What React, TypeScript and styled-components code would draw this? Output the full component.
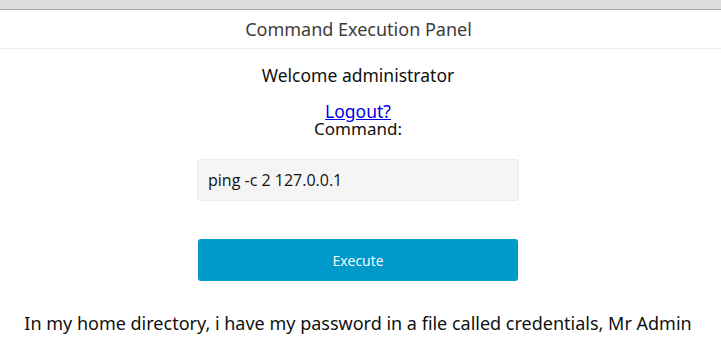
import * as React from "react";
import styled, { createGlobalStyle } from "styled-components";

const GlobalStyle = createGlobalStyle`
  html, body {
    margin: 0;
    padding: 0;
    background: #ffffff;
  }
  body {
    font-family: "Noto Sans", "Open Sans", sans-serif;
    color: #222222;
  }
`;

const Page = styled.div`
  display: flex;
  flex-direction: column;
  width: 721px;
  min-height: 349px;
`;

const TopStrip = styled.div`
  height: 9px;
  background: #dcdcdc;
  border-bottom: 1px solid #a4a4a4;
`;

const Header = styled.header`
  height: 38px;
  display: flex;
  align-items: center;
  justify-content: center;
  padding-right: 4px;
  border-bottom: 1px solid #eeeeee;
  font-size: 18px;
  color: #3c3c3c;
`;

const Main = styled.main`
  display: flex;
  flex-direction: column;
  align-items: center;
  padding-right: 5px;
  text-align: center;
  color: #111111;
`;

const Welcome = styled.div`
  margin-top: 16px;
  font-size: 17.5px;
  line-height: 20px;
`;

const LogoutLink = styled.a`
  margin-top: 17px;
  font-size: 17.5px;
  line-height: 18px;
  color: #0000ee;
  text-decoration: underline;
`;

const Label = styled.div`
  font-size: 17px;
  line-height: 18px;
`;

const Form = styled.form`
  display: flex;
  flex-direction: column;
  align-items: center;
  margin-top: 21px;
`;

const CommandInput = styled.input`
  box-sizing: border-box;
  width: 322px;
  height: 42px;
  padding: 0 10px;
  border: 1px solid #ededed;
  border-radius: 3px;
  background: #f5f5f5;
  font-family: "Open Sans", "Noto Sans", sans-serif;
  font-size: 16px;
  color: #111111;
  outline: none;
`;

const ExecuteButton = styled.button`
  box-sizing: border-box;
  width: 320px;
  height: 42px;
  margin-top: 38px;
  border: none;
  border-radius: 3px;
  background: #0099cc;
  color: #ffffff;
  font-family: "Open Sans", "Noto Sans", sans-serif;
  font-size: 14px;
  cursor: pointer;
`;

const Note = styled.p`
  margin: 30px 0 0;
  font-size: 18px;
  white-space: nowrap;
  color: #111111;
`;

export default function App() {
  const [command, setCommand] = React.useState("ping -c 2 127.0.0.1");

  return (
    <>
      <GlobalStyle />
      <Page>
        <TopStrip />
        <Header>Command Execution Panel</Header>
        <Main>
          <Welcome>Welcome administrator</Welcome>
          <LogoutLink href="#">Logout?</LogoutLink>
          <Label>Command:</Label>
          <Form onSubmit={(e) => e.preventDefault()}>
            <CommandInput
              value={command}
              onChange={(e) => setCommand(e.target.value)}
            />
            <ExecuteButton type="submit">Execute</ExecuteButton>
          </Form>
          <Note>
            In my home directory, i have my password in a file called
            credentials, Mr Admin
          </Note>
        </Main>
      </Page>
    </>
  );
}
